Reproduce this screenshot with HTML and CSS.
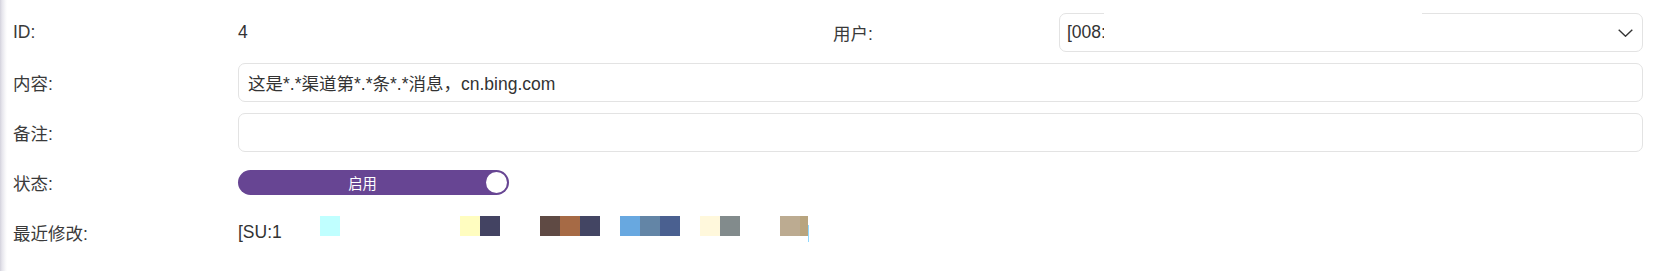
FILE: index.html
```html
<!DOCTYPE html>
<html lang="zh-CN">
<head>
<meta charset="utf-8">
<title>详情</title>
<link rel="stylesheet" href="styles.css">
</head>
<body>
<div class="page">
  <div class="form">
    <div class="row row-split">
      <div class="label">ID:</div>
      <div class="value">4</div>
      <div class="label">用户:</div>
      <div class="select">
        <span class="select-text">[008:</span>
        <svg class="chevron" width="15" height="8" viewBox="0 0 15 8"><polyline points="0.7,0.7 7.5,7.2 14.3,0.7" fill="none" stroke="#333" stroke-width="1.4"/></svg>
        <div class="mask"></div>
      </div>
    </div>
    <div class="row">
      <div class="label">内容:</div>
      <div class="input">这是*.*渠道第*.*条*.*消息，cn.bing.com</div>
    </div>
    <div class="row">
      <div class="label">备注:</div>
      <div class="input"></div>
    </div>
    <div class="row">
      <div class="label">状态:</div>
      <div class="value">
        <div class="switch"><span class="switch-text">启用</span><span class="knob"></span></div>
      </div>
    </div>
    <div class="row">
      <div class="label">最近修改:</div>
      <div class="value modified">
        <span class="su">[SU:1</span>
        <div class="strip">
          <span class="sw c-cyan"></span>
          <span class="sw gap6"></span>
          <span class="sw c-yellow"></span>
          <span class="sw c-dark"></span>
          <span class="sw gap2"></span>
          <span class="sw c-brown"></span>
          <span class="sw c-orange"></span>
          <span class="sw c-navy"></span>
          <span class="sw gap1"></span>
          <span class="sw c-blue"></span>
          <span class="sw c-steel"></span>
          <span class="sw c-indigo"></span>
          <span class="sw gap1"></span>
          <span class="sw c-pale"></span>
          <span class="sw c-gray"></span>
          <span class="sw gap2"></span>
          <span class="sw c-tan"></span>
          <span class="sw c-tan2"></span>
          <span class="caret"></span>
        </div>
      </div>
    </div>
  </div>
</div>
</body>
</html>
```
FILE: styles.css
```css
html, body {
  margin: 0;
  padding: 0;
  background: #fff;
}
.page {
  width: 1660px;
  height: 271px;
  box-sizing: border-box;
  padding: 13px 17px 0 13px;
  background: linear-gradient(to right, #d3d2dc 0, #e6e5ec 2px, #f6f6f8 5px, #fff 7px);
  font-family: "Liberation Sans", "Noto Sans CJK SC", sans-serif;
  font-size: 17.5px;
  color: #333;
}
.form {
  display: grid;
  row-gap: 11px;
}
.row {
  display: grid;
  grid-template-columns: 225px 1fr;
  height: 39px;
  align-items: center;
}
.row-split {
  grid-template-columns: 225px 595px 226px 1fr;
}
.label {
  color: #3a3a3a;
  white-space: nowrap;
}
.value {
  display: flex;
  align-items: center;
  height: 39px;
}
.select, .input {
  position: relative;
  box-sizing: border-box;
  height: 39px;
  border: 1px solid #e3e3e3;
  border-radius: 7px;
  display: flex;
  align-items: center;
  padding: 0 9px;
  background: #fff;
}
.select {
  justify-content: space-between;
  padding-left: 7px;
}
.chevron {
  display: block;
}
.mask {
  position: absolute;
  left: 44px;
  top: -14px;
  width: 318px;
  height: 46px;
  background: #fff;
}
.switch {
  width: 271px;
  height: 25px;
  border-radius: 13px;
  background: #674593;
  display: flex;
  align-items: center;
  box-sizing: border-box;
  padding: 0 2px 0 0;
}
.switch-text {
  flex: 1;
  text-align: center;
  color: #fff;
  font-size: 14.3px;
  padding-left: 1px;
}
.knob {
  width: 21px;
  height: 21px;
  border-radius: 50%;
  background: #fff;
}
.su {
  width: 82px;
  flex: none;
}
.strip {
  display: flex;
  align-items: flex-start;
  height: 20px;
  margin-bottom: 13px;
}
.sw {
  width: 20px;
  height: 20px;
  flex: none;
}
.gap1 { width: 20px; }
.gap2 { width: 40px; }
.gap6 { width: 120px; }
.c-cyan { background: #c0ffff; }
.c-yellow { background: #fffdc0; }
.c-dark { background: #434362; }
.c-brown { background: #5f4a44; }
.c-orange { background: #a66a45; }
.c-navy { background: #434563; }
.c-blue { background: #68a8e0; }
.c-steel { background: #6385a6; }
.c-indigo { background: #4a6090; }
.c-pale { background: #fff8dc; }
.c-gray { background: #828b8c; }
.c-tan { background: #bcab91; }
.c-tan2 { background: #b8a47e; width: 8px; }
.caret {
  width: 1px;
  height: 17px;
  margin-top: 9px;
  background: #8fd8ff;
  flex: none;
}
```
